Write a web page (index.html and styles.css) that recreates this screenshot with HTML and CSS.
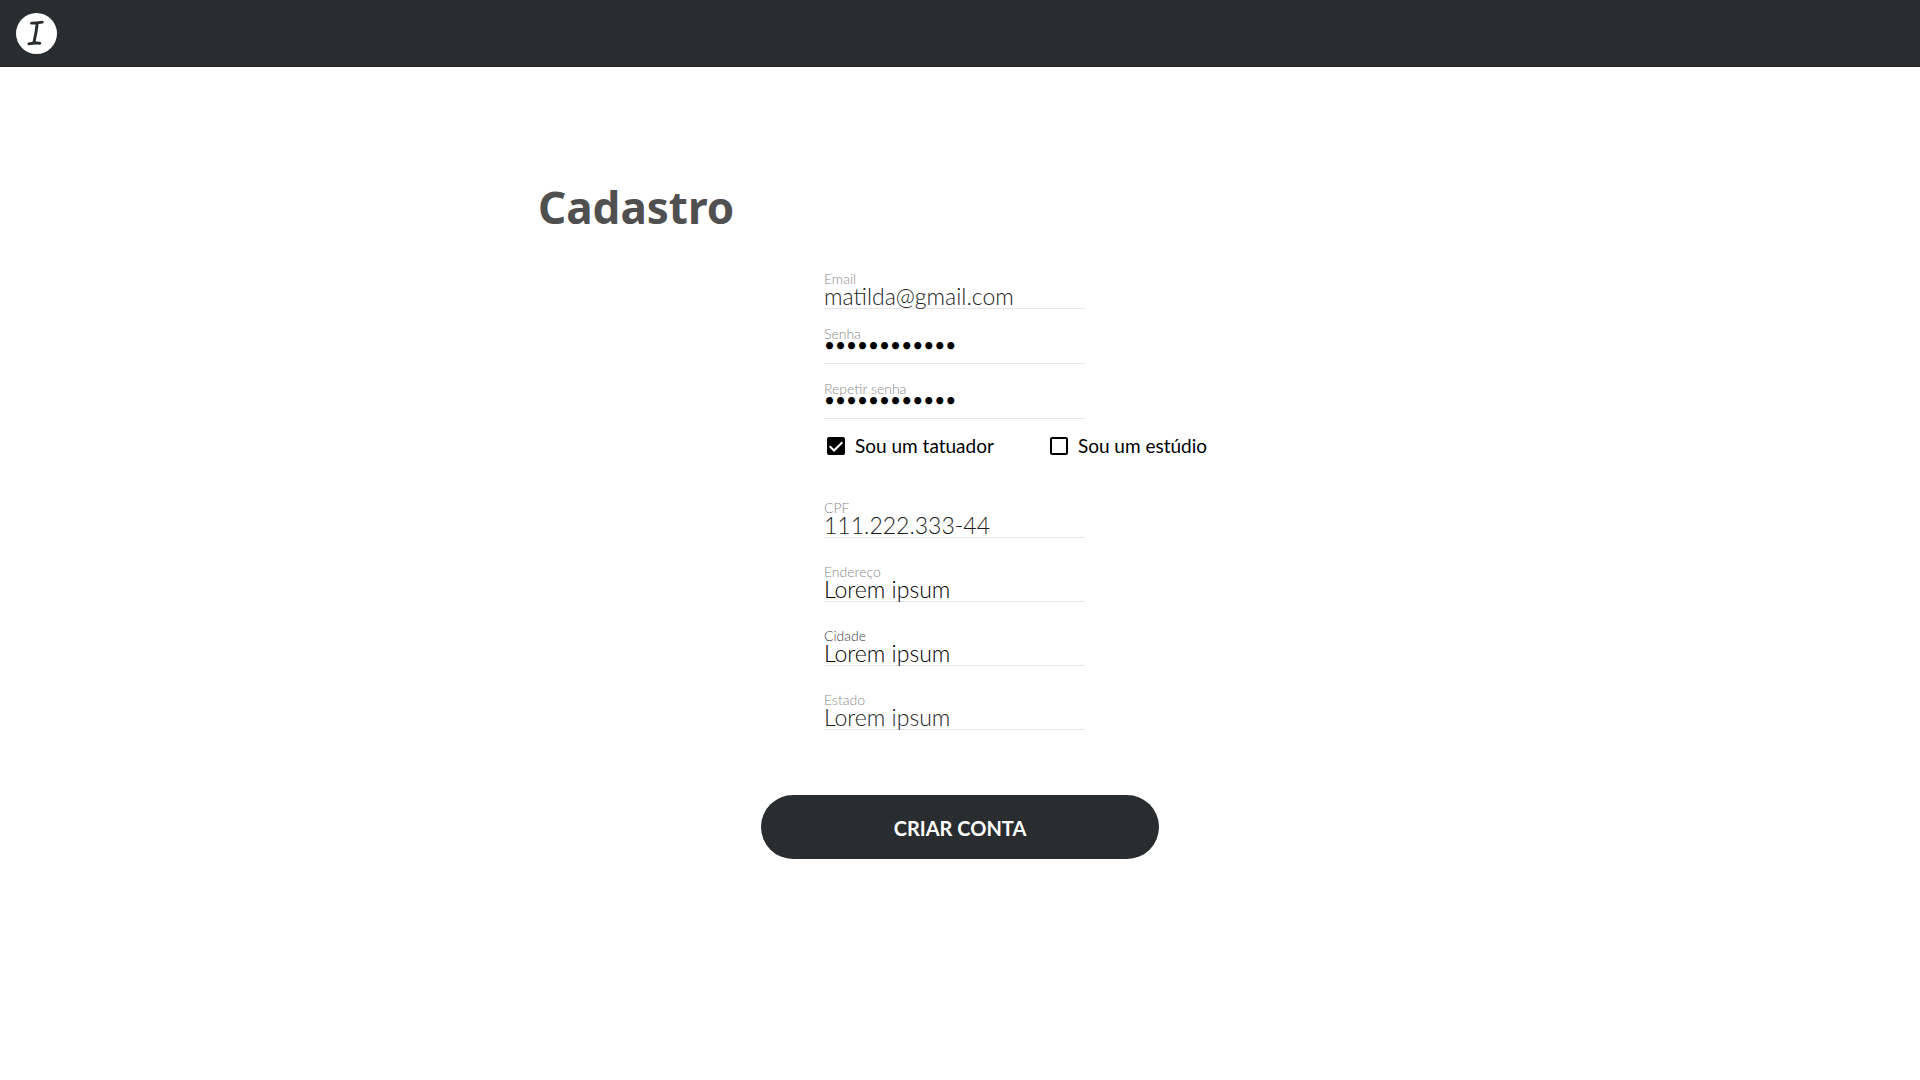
FILE: index.html
```html
<!DOCTYPE html>
<html lang="pt-BR">
<head>
<meta charset="utf-8">
<title>Cadastro</title>
<meta name="viewport" content="width=device-width, initial-scale=1">
<link rel="stylesheet" href="styles.css">
</head>
<body>
<header class="topbar">
  <a class="logo" href="#" aria-label="Início">
    <svg viewBox="0 0 41 41" width="41" height="41" aria-hidden="true">
      <circle cx="20.5" cy="20.5" r="20.5" fill="#fff"/>
      <path d="M15.500 10.100 Q21 9.900 26.200 9.100 M21.300 10 Q20.200 20 17.800 30 M12.900 30.800 Q18.500 29.600 23.800 30.200" fill="none" stroke="#292d30" stroke-width="2.900" stroke-linecap="round"/>
    </svg>
  </a>
</header>
<main class="page">
  <h1 class="title">Cadastro</h1>
  <form class="form">
    <div class="fields fields-account">
      <div class="field"><label class="label" for="email">Email</label><input class="input" id="email" type="email" value="matilda@gmail.com"></div>
      <div class="field"><label class="label" for="senha">Senha</label><input class="input password" id="senha" type="password" value="abcdefghijkl"></div>
      <div class="field"><label class="label" for="repetir">Repetir senha</label><input class="input password" id="repetir" type="password" value="abcdefghijkl"></div>
    </div>
    <div class="choices">
      <label class="choice"><input class="check" type="checkbox" checked>Sou um tatuador</label>
      <label class="choice"><input class="check" type="checkbox">Sou um estúdio</label>
    </div>
    <div class="fields fields-details">
      <div class="field"><label class="label" for="cpf">CPF</label><input class="input" id="cpf" type="text" value="111.222.333-44"></div>
      <div class="field"><label class="label" for="endereco">Endereço</label><input class="input dark" id="endereco" type="text" value="Lorem ipsum"></div>
      <div class="field"><label class="label dark" for="cidade">Cidade</label><input class="input dark" id="cidade" type="text" value="Lorem ipsum"></div>
      <div class="field"><label class="label" for="estado">Estado</label><input class="input" id="estado" type="text" value="Lorem ipsum"></div>
    </div>
    <button class="submit" type="submit">CRIAR CONTA</button>
  </form>
</main>
</body>
</html>
```
FILE: styles.css
```css
* { box-sizing: border-box; }
body {
  margin: 0;
  background: #fff;
  color: #000;
  font-family: Lato, "Liberation Sans", sans-serif;
}
.topbar {
  display: flex;
  align-items: center;
  height: 67px;
  padding: 0 16px;
  background: #292d30;
  border-bottom: 1px solid #2b2226;
}
.logo { display: flex; }
.page {
  max-width: 844px;
  margin: 0 auto;
  padding: 112px 0 64px;
}
.title {
  margin: 0;
  color: #505050;
  font: bold 44px/56px "Noto Sans", "Open Sans", sans-serif;
}
.form {
  display: flex;
  flex-direction: column;
  padding-top: 36px;
}
.fields {
  display: flex;
  flex-direction: column;
  width: 261px;
  margin-left: 286px;
}
.fields-account { gap: 17px; }
.fields-details { gap: 26px; padding-top: 42px; }
.field {
  display: flex;
  flex-direction: column;
  border-bottom: 1px solid #e6e6e6;
}
.label {
  color: #8a8a8a;
  font-size: 14px;
  line-height: 16px;
  font-weight: 300;
}
.label.dark { color: #3c3c3c; }
.input {
  width: 100%;
  height: 28px;
  margin: -5px 0 -2px;
  padding: 0;
  border: 0;
  outline: 0;
  background: none;
  color: #1c1c1c;
  font: 300 23px/28px Lato, "Liberation Sans", sans-serif;
}
.input.dark { color: #000; }
.input.password {
  padding-bottom: 14px;
  color: #000;
  font: 400 19px/14px Lato, "Liberation Sans", sans-serif;
}
.choices {
  display: flex;
  gap: 56px;
  margin-left: 289px;
  padding-top: 15px;
}
.choice {
  display: flex;
  align-items: center;
  gap: 10px;
  font-size: 19px;
  line-height: 24px;
  white-space: nowrap;
}
.check {
  appearance: none;
  width: 18px;
  height: 18px;
  margin: 0;
  border: 2px solid #000;
  border-radius: 2px;
}
.check:checked {
  background: #000 url("data:image/svg+xml,%3Csvg xmlns='http://www.w3.org/2000/svg' viewBox='0 0 14 14'%3E%3Cpath d='M0.7 7.200l4.300 4.300 8.400-8.400' fill='none' stroke='white' stroke-width='2'/%3E%3C/svg%3E") center / 14px 14px no-repeat;
}
.submit {
  align-self: center;
  width: 398px;
  max-width: 100%;
  height: 64px;
  margin-top: 65px;
  padding: 2px 0 0;
  border: 0;
  border-radius: 32px;
  background: #292d30;
  color: #fff;
  font: bold 20px/24px Lato, "Liberation Sans", sans-serif;
}
```
